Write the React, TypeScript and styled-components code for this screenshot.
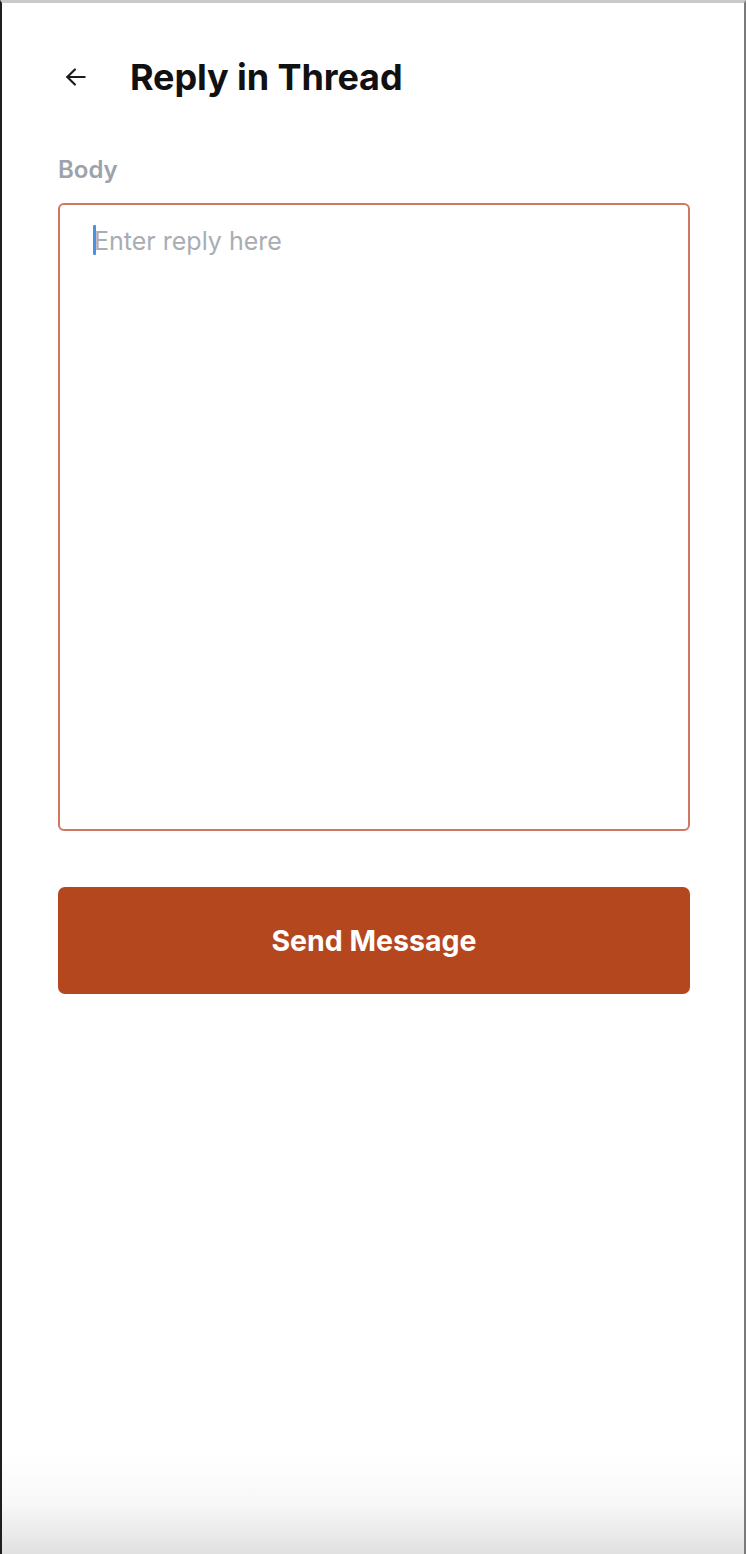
import React from "react";
import styled, { createGlobalStyle } from "styled-components";

const Global = createGlobalStyle`
  html, body { margin: 0; padding: 0; background: #ffffff; }
  body { font-family: Inter, "Noto Sans", "Liberation Sans", sans-serif; }
  * { box-sizing: border-box; }
`;

const Frame = styled.div`
  width: 746px;
  height: 1554px;
  border-left: 2px solid #1e1e1e;
  border-right: 2px solid #7a7a7a;
  border-top: 3px solid #c9c9c9;
  background: linear-gradient(
    to bottom,
    #ffffff 0px,
    #ffffff 1450px,
    #f8f8f8 1500px,
    #dfdfdf 1554px
  );
  display: flex;
  flex-direction: column;
  padding: 50px 54px 0 56px;
`;

const Header = styled.header`
  display: flex;
  align-items: center;
  height: 48px;
  gap: 40px;
`;

const BackButton = styled.button`
  border: none;
  background: none;
  padding: 0;
  margin-left: 4px;
  width: 28px;
  height: 28px;
  display: flex;
  align-items: center;
  justify-content: center;
  color: #1b1b1b;
  cursor: pointer;
`;

const Title = styled.h1`
  margin: 0;
  font-size: 36px;
  font-weight: 700;
  letter-spacing: -0.1px;
  color: #111111;
`;

const Label = styled.label`
  margin-top: 56px;
  font-size: 24px;
  line-height: 26px;
  font-weight: 600;
  color: #9ca3ad;
`;

const Field = styled.div`
  position: relative;
  margin-top: 20px;
`;

const TextArea = styled.textarea`
  display: block;
  width: 100%;
  height: 628px;
  border: 2px solid #d27660;
  border-radius: 6px;
  padding: 21px 34px;
  font-family: Inter, "Noto Sans", "Liberation Sans", sans-serif;
  font-size: 25px;
  line-height: 30px;
  color: #222;
  resize: none;
  outline: none;
  background: #ffffff;
  &::placeholder {
    color: #a8adb4;
  }
`;

const Caret = styled.span`
  position: absolute;
  left: 35px;
  top: 22px;
  width: 3px;
  height: 30px;
  background: #4a90e2;
  border-radius: 1px;
`;

const SendButton = styled.button`
  margin-top: 56px;
  height: 107px;
  width: 100%;
  border: none;
  border-radius: 7px;
  background: #b5471f;
  color: #ffffff;
  font-family: Inter, "Noto Sans", "Liberation Sans", sans-serif;
  font-size: 28.5px;
  font-weight: 700;
  cursor: pointer;
`;

const ArrowIcon = () => (
  <svg width="26" height="26" viewBox="0 0 24 24" fill="none" stroke="currentColor" strokeWidth="2" strokeLinecap="round" strokeLinejoin="round">
    <path d="M20 12H4" />
    <path d="M11 5l-7 7 7 7" />
  </svg>
);

export default function App() {
  return (
    <>
      <Global />
      <Frame>
        <Header>
          <BackButton aria-label="Back">
            <ArrowIcon />
          </BackButton>
          <Title>Reply in Thread</Title>
        </Header>
        <Label htmlFor="body">Body</Label>
        <Field>
          <TextArea id="body" placeholder="Enter reply here" />
          <Caret />
        </Field>
        <SendButton>Send Message</SendButton>
      </Frame>
    </>
  );
}
